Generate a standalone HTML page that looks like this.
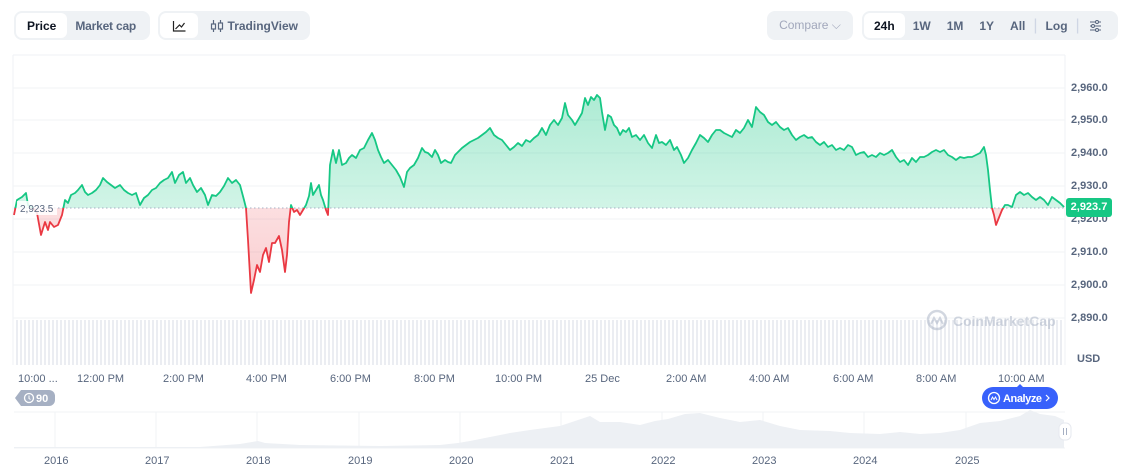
<!DOCTYPE html>
<html><head><meta charset="utf-8"><style>
*{margin:0;padding:0;box-sizing:border-box}
body{width:1133px;height:472px;background:#fff;font-family:"Liberation Sans",sans-serif;position:relative;overflow:hidden;color:#58667e}
.grp{position:absolute;top:11px;height:29px;background:#eff2f5;border-radius:8px;display:flex;align-items:center;padding:2px;white-space:nowrap}
.btn{height:25px;display:flex;align-items:center;padding:0 10px;font-size:12px;font-weight:bold;color:#58667e;border-radius:6px;white-space:nowrap}
.btn.on{background:#fff;color:#0d1421}
.yl{position:absolute;left:1071px;font-size:11px;color:#58667e;font-weight:bold}
.xl{position:absolute;top:373px;font-size:11px;color:#58667e}
.yr{position:absolute;top:455px;font-size:11px;color:#58667e}
</style></head><body>
<div class="grp" style="left:14px;width:136px"><div class="btn on" style="padding:0 11px">Price</div><div class="btn" style="padding:0 8px;letter-spacing:-0.2px">Market cap</div></div>
<div class="grp" style="left:158px;width:152px"><div class="btn on" style="width:40px;justify-content:center"><svg width="14" height="12"><path d="M1.5 1v10h12M3.5 9l4-4 2 2 3-4" fill="none" stroke="#222" stroke-width="1.2"/></svg></div><div class="btn" style="padding-left:12px"><svg width="14" height="12" style="margin-right:4px"><path d="M3.5 0v12M10.5 0v12" stroke="#58667e" stroke-width="1.2"/><rect x="1.5" y="4" width="4" height="5" fill="#eff2f5" stroke="#58667e" stroke-width="1.2"/><rect x="8.5" y="3" width="4" height="6" fill="#eff2f5" stroke="#58667e" stroke-width="1.2"/></svg>TradingView</div></div>
<div class="grp" style="left:767px;width:86px;justify-content:center"><span style="font-size:12px;color:#a1a7bb">Compare&nbsp;⌵</span></div>
<div class="grp" style="left:862px;width:256px"><div class="btn on" style="padding:0 10px">24h</div><div class="btn" style="padding:0 8px">1W</div><div class="btn" style="padding:0 8px">1M</div><div class="btn" style="padding:0 8px">1Y</div><div class="btn" style="padding:0 8px">All</div><span style="color:#cfd6e4">|</span><div class="btn" style="padding:0 8px">Log</div><span style="color:#cfd6e4">|</span><div class="btn" style="padding:0 9px"><svg width="13" height="12"><path d="M1 2h11M1 6h11M1 10h11" stroke="#58667e" stroke-width="1"/><circle cx="8" cy="2" r="1.5" fill="#eff2f5" stroke="#58667e"/><circle cx="4" cy="6" r="1.5" fill="#eff2f5" stroke="#58667e"/><circle cx="8" cy="10" r="1.5" fill="#eff2f5" stroke="#58667e"/></svg></div></div>

<svg width="1133" height="472" style="position:absolute;left:0;top:0">
<defs>
<linearGradient id="gg" x1="0" y1="0" x2="0" y2="1"><stop offset="0" stop-color="#16c784" stop-opacity=".35"/><stop offset="1" stop-color="#16c784" stop-opacity=".08"/></linearGradient>
<linearGradient id="rg" x1="0" y1="0" x2="0" y2="1"><stop offset="0" stop-color="#ea3943" stop-opacity=".05"/><stop offset="1" stop-color="#ea3943" stop-opacity=".25"/></linearGradient>
<clipPath id="up"><rect x="0" y="0" width="1133" height="208"/></clipPath>
<clipPath id="dn"><rect x="0" y="208" width="1133" height="200"/></clipPath>
<pattern id="vb" width="4" height="10" patternUnits="userSpaceOnUse"><rect width="2" height="10" fill="#e6e9ef"/></pattern>
<polygon id="fp" points="14,208 14,215 17,200 22,197 26,193 28,205 33,208 37,213 41,235 45,222 48,230 50,222 54,227 58,225 62,215 65,200 68,203 71,195 75,193 78,190 82,185 85,192 88,195 92,193 96,190 100,185 103,178 107,182 111,185 115,188 120,185 124,190 128,193 132,195 136,193 140,205 144,198 148,195 152,190 156,188 160,183 164,180 168,178 172,172 175,183 179,175 183,172 186,183 190,178 193,185 197,192 201,188 205,195 208,205 212,195 216,196 220,192 224,186 228,178 232,183 236,180 240,185 244,200 246,208 248,240 251,293 254,280 257,265 260,272 263,255 266,248 269,262 272,243 275,243 279,236 282,250 285,272 287,255 289,222 291,205 294,212 297,210 300,215 303,210 306,205 309,196 311,183 313,195 316,190 319,185 321,195 323,200 326,210 328,215 330,165 333,150 336,163 339,150 342,165 346,163 349,158 352,155 356,158 360,150 364,148 368,140 372,133 375,140 378,150 381,157 384,163 388,160 392,165 396,170 400,177 404,187 407,172 410,168 414,165 418,158 422,148 425,152 428,153 432,157 435,150 438,155 441,163 445,160 448,162 451,163 455,155 458,152 462,148 466,145 470,142 474,140 478,138 482,135 486,132 490,128 494,135 498,138 502,140 506,145 510,150 514,147 518,143 522,146 526,140 530,142 534,138 538,135 542,128 546,135 550,125 554,120 558,125 562,118 565,103 568,115 572,120 575,125 578,120 582,113 585,98 588,105 591,97 594,100 597,95 600,98 602,112 605,130 608,115 611,117 614,125 617,128 620,135 623,130 626,132 629,128 632,137 636,135 640,140 644,135 648,143 652,148 656,135 659,143 662,142 666,145 670,140 674,150 677,147 681,155 684,163 688,158 692,150 696,143 700,135 704,138 708,142 712,135 716,130 720,130 724,133 728,135 732,137 736,130 740,133 744,128 748,120 752,127 756,107 760,112 764,115 768,122 772,125 776,122 780,127 784,130 788,128 792,135 796,140 800,137 804,135 808,138 812,137 816,142 820,145 824,142 828,147 832,145 836,150 840,148 844,150 848,145 852,147 856,155 860,153 864,152 868,157 872,155 876,157 880,153 884,155 888,153 892,150 896,157 900,162 904,160 908,165 912,158 916,162 920,157 924,157 928,155 932,152 936,150 940,152 944,150 948,155 952,157 956,160 960,157 964,158 968,157 972,157 976,155 980,153 984,147 986,155 988,170 990,190 992,208 994,215 996,225 998,220 1000,215 1002,210 1005,205 1008,205 1012,207 1016,195 1020,192 1024,195 1028,193 1032,197 1036,200 1040,197 1044,200 1048,205 1052,197 1056,200 1060,203 1064,207 1064,208"/>
<polyline id="ln" fill="none" stroke-width="1.8" stroke-linejoin="round" points="14,215 17,200 22,197 26,193 28,205 33,208 37,213 41,235 45,222 48,230 50,222 54,227 58,225 62,215 65,200 68,203 71,195 75,193 78,190 82,185 85,192 88,195 92,193 96,190 100,185 103,178 107,182 111,185 115,188 120,185 124,190 128,193 132,195 136,193 140,205 144,198 148,195 152,190 156,188 160,183 164,180 168,178 172,172 175,183 179,175 183,172 186,183 190,178 193,185 197,192 201,188 205,195 208,205 212,195 216,196 220,192 224,186 228,178 232,183 236,180 240,185 244,200 246,208 248,240 251,293 254,280 257,265 260,272 263,255 266,248 269,262 272,243 275,243 279,236 282,250 285,272 287,255 289,222 291,205 294,212 297,210 300,215 303,210 306,205 309,196 311,183 313,195 316,190 319,185 321,195 323,200 326,210 328,215 330,165 333,150 336,163 339,150 342,165 346,163 349,158 352,155 356,158 360,150 364,148 368,140 372,133 375,140 378,150 381,157 384,163 388,160 392,165 396,170 400,177 404,187 407,172 410,168 414,165 418,158 422,148 425,152 428,153 432,157 435,150 438,155 441,163 445,160 448,162 451,163 455,155 458,152 462,148 466,145 470,142 474,140 478,138 482,135 486,132 490,128 494,135 498,138 502,140 506,145 510,150 514,147 518,143 522,146 526,140 530,142 534,138 538,135 542,128 546,135 550,125 554,120 558,125 562,118 565,103 568,115 572,120 575,125 578,120 582,113 585,98 588,105 591,97 594,100 597,95 600,98 602,112 605,130 608,115 611,117 614,125 617,128 620,135 623,130 626,132 629,128 632,137 636,135 640,140 644,135 648,143 652,148 656,135 659,143 662,142 666,145 670,140 674,150 677,147 681,155 684,163 688,158 692,150 696,143 700,135 704,138 708,142 712,135 716,130 720,130 724,133 728,135 732,137 736,130 740,133 744,128 748,120 752,127 756,107 760,112 764,115 768,122 772,125 776,122 780,127 784,130 788,128 792,135 796,140 800,137 804,135 808,138 812,137 816,142 820,145 824,142 828,147 832,145 836,150 840,148 844,150 848,145 852,147 856,155 860,153 864,152 868,157 872,155 876,157 880,153 884,155 888,153 892,150 896,157 900,162 904,160 908,165 912,158 916,162 920,157 924,157 928,155 932,152 936,150 940,152 944,150 948,155 952,157 956,160 960,157 964,158 968,157 972,157 976,155 980,153 984,147 986,155 988,170 990,190 992,208 994,215 996,225 998,220 1000,215 1002,210 1005,205 1008,205 1012,207 1016,195 1020,192 1024,195 1028,193 1032,197 1036,200 1040,197 1044,200 1048,205 1052,197 1056,200 1060,203 1064,207"/>
</defs>
<line x1="13" y1="55" x2="1065" y2="55" stroke="#eff2f5"/>
<line x1="13" y1="55" x2="13" y2="365" stroke="#eff2f5"/>
<line x1="1065" y1="55" x2="1065" y2="365" stroke="#eff2f5"/>
<g stroke="#f1f3f6"><line x1="13" y1="88" x2="1065" y2="88"/><line x1="13" y1="120" x2="1065" y2="120"/><line x1="13" y1="153" x2="1065" y2="153"/><line x1="13" y1="186" x2="1065" y2="186"/><line x1="13" y1="219" x2="1065" y2="219"/><line x1="13" y1="252" x2="1065" y2="252"/><line x1="13" y1="285" x2="1065" y2="285"/><line x1="13" y1="318" x2="1065" y2="318"/></g>
<rect x="14" y="320" width="1050" height="45" fill="url(#vb)" opacity=".8"/>
<g clip-path="url(#up)"><use href="#fp" fill="url(#gg)"/></g>
<g clip-path="url(#dn)"><use href="#fp" fill="url(#rg)"/></g>
<line x1="14" y1="208" x2="1065" y2="208" stroke="#a6b0c3" stroke-dasharray="1.5 2.5"/>
<g clip-path="url(#up)"><use href="#ln" stroke="#16c784"/></g>
<g clip-path="url(#dn)"><use href="#ln" stroke="#ea3943"/></g>
<rect x="17" y="201" width="40" height="14" fill="#fff" opacity=".85"/>
<text x="20" y="212" font-size="10" fill="#58667e" font-family="Liberation Sans">2,923.5</text>
<g opacity=".5"><circle cx="937" cy="320" r="9" fill="none" stroke="#a6b0c3" stroke-width="2.5"/><path d="M931 324l3-6 3 5 3-5 3 6" fill="none" stroke="#a6b0c3" stroke-width="2"/><text x="953" y="326" font-size="14" font-weight="bold" fill="#a6b0c3" font-family="Liberation Sans">CoinMarketCap</text></g>
<line x1="14" y1="412" x2="1065" y2="412" stroke="#f1f3f6"/>
<line x1="14" y1="448" x2="1065" y2="448" stroke="#f1f3f6"/>
<g stroke="#f1f3f6"><line x1="55" y1="412" x2="55" y2="448"/><line x1="156" y1="412" x2="156" y2="448"/><line x1="257" y1="412" x2="257" y2="448"/><line x1="359" y1="412" x2="359" y2="448"/><line x1="460" y1="412" x2="460" y2="448"/><line x1="561" y1="412" x2="561" y2="448"/><line x1="662" y1="412" x2="662" y2="448"/><line x1="763" y1="412" x2="763" y2="448"/><line x1="864" y1="412" x2="864" y2="448"/><line x1="966" y1="412" x2="966" y2="448"/></g>
<polygon fill="#edf0f4" points="14,448 14,447 200,447 240,444 258,441 265,443 300,445 380,446 440,445 458,443 470,441 490,437 510,433 530,430 560,426 590,416 600,422 620,422 640,425 655,421 668,419 685,414 700,413 720,418 740,422 760,420 780,426 800,430 830,431 850,433 880,434 900,432 920,434 940,433 960,430 980,423 1000,421 1020,416 1030,410 1040,414 1055,416 1064,420 1064,448"/>
<rect x="1059" y="423" width="12" height="17" rx="5" fill="#fff" stroke="#e6e9ef"/>
<path d="M1063.5 428v7M1066.5 428v7" stroke="#a6b0c3"/>
<path d="M15 398l6-8h28a6 6 0 0 1 6 6v4a6 6 0 0 1-6 6h-28z" fill="#a6b0c3"/>
<circle cx="29" cy="398" r="4.5" fill="none" stroke="#fff" stroke-width="1.3"/><path d="M29 395.5v3l1.5 1" stroke="#fff" fill="none"/>
<text x="36" y="402" font-size="11" font-weight="bold" fill="#fff" font-family="Liberation Sans">90</text>
<rect x="982" y="387" width="76" height="22" rx="11" fill="#3861fb"/><path d="M1017 387l3-3 3 3z" fill="#3861fb"/>
<circle cx="994" cy="398" r="5.5" fill="none" stroke="#fff" stroke-width="1.3"/><path d="M991 400l1.5-3 1.5 2.5 1.5-2.5 1.5 3" fill="none" stroke="#fff" stroke-width="1"/>
<text x="1003" y="402" font-size="11" font-weight="bold" fill="#fff" font-family="Liberation Sans" textLength="39">Analyze</text>
<path d="M1046 395l3 3-3 3" fill="none" stroke="#fff" stroke-width="1.2"/>
</svg>
<div class="yl" style="top:82px">2,960.0</div>
<div class="yl" style="top:114px">2,950.0</div>
<div class="yl" style="top:147px">2,940.0</div>
<div class="yl" style="top:180px">2,930.0</div>
<div class="yl" style="top:213px">2,920.0</div>
<div class="yl" style="top:246px">2,910.0</div>
<div class="yl" style="top:279px">2,900.0</div>
<div class="yl" style="top:312px">2,890.0</div>
<div style="position:absolute;left:1066px;top:198px;width:46px;height:19px;background:#16c784;border-radius:3px;color:#fff;font-size:11px;font-weight:bold;line-height:19px;text-align:center">2,923.7</div>
<div style="position:absolute;left:1077px;top:353px;font-size:11px;font-weight:bold;color:#58667e">USD</div>
<div class="xl" style="left:18px">10:00 ...</div>
<div class="xl" style="left:77px">12:00 PM</div>
<div class="xl" style="left:163px">2:00 PM</div>
<div class="xl" style="left:246px">4:00 PM</div>
<div class="xl" style="left:330px">6:00 PM</div>
<div class="xl" style="left:414px">8:00 PM</div>
<div class="xl" style="left:495px">10:00 PM</div>
<div class="xl" style="left:585px">25 Dec</div>
<div class="xl" style="left:666px">2:00 AM</div>
<div class="xl" style="left:749px">4:00 AM</div>
<div class="xl" style="left:833px">6:00 AM</div>
<div class="xl" style="left:916px">8:00 AM</div>
<div class="xl" style="left:998px">10:00 AM</div>
<div class="yr" style="left:44px">2016</div>
<div class="yr" style="left:145px">2017</div>
<div class="yr" style="left:246px">2018</div>
<div class="yr" style="left:348px">2019</div>
<div class="yr" style="left:449px">2020</div>
<div class="yr" style="left:550px">2021</div>
<div class="yr" style="left:651px">2022</div>
<div class="yr" style="left:752px">2023</div>
<div class="yr" style="left:853px">2024</div>
<div class="yr" style="left:955px">2025</div>
</body></html>
